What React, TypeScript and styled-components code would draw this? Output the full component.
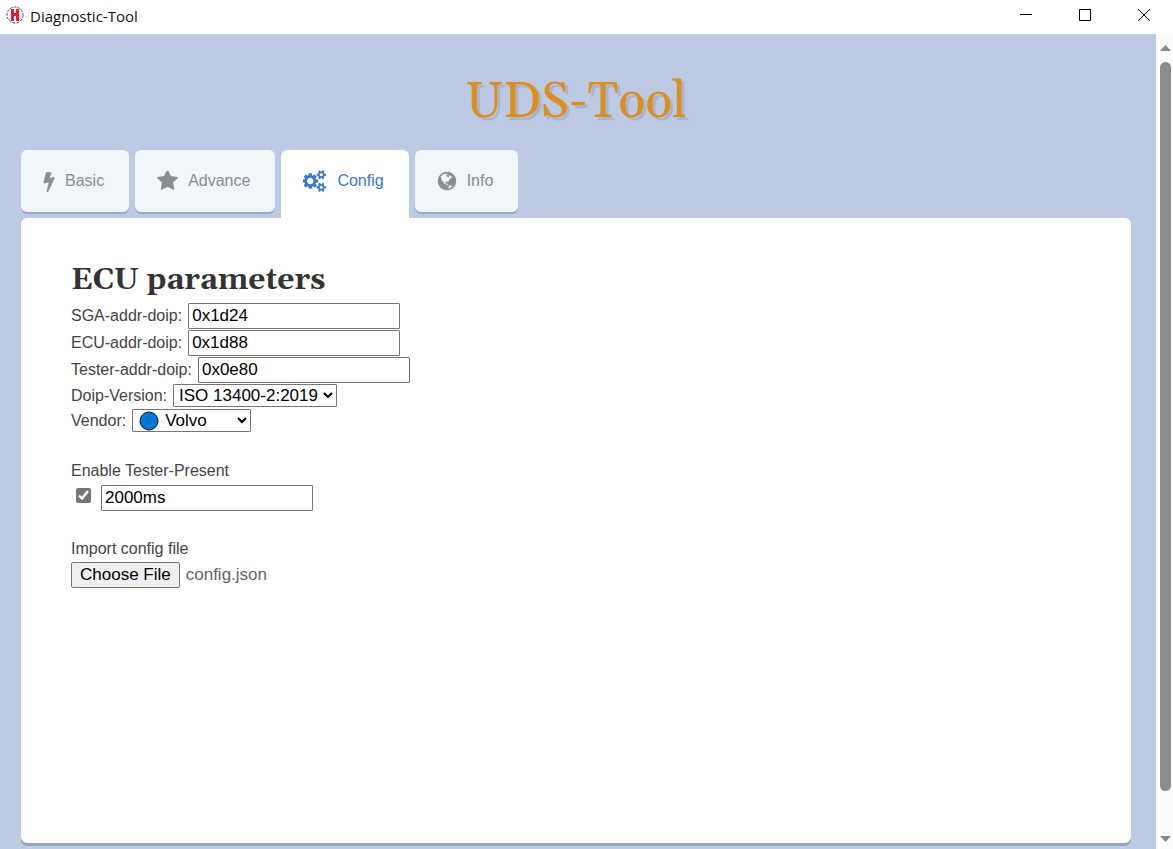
import React, { useRef } from "react";
import styled, { createGlobalStyle, css } from "styled-components";

const sans = `"Liberation Sans", Arial, sans-serif`;
const serif = `Georgia, Gelasio, "Liberation Serif", serif`;

const GlobalStyle = createGlobalStyle`
  *, *::before, *::after { box-sizing: border-box; }
  body {
    margin: 0;
    background: #bdcae4;
    color: #444;
    font: 16px/24px ${sans};
  }
`;

const Window = styled.div`
  display: flex;
  flex-direction: column;
  min-height: 100vh;
`;

const TitleBar = styled.header`
  display: flex;
  align-items: center;
  height: 34px;
  padding: 0 0 4px 6px;
  background: #fff;
`;

const AppName = styled.span`
  flex: 1;
  margin-left: 6px;
  padding-top: 2px;
  color: #111;
  font: 15px/20px "Open Sans", "Noto Sans", sans-serif;
`;

const WindowButton = styled.button`
  display: flex;
  align-items: center;
  justify-content: center;
  width: 59px;
  height: 30px;
  padding: 0;
  border: 0;
  background: none;
  color: #000;
`;

const Body = styled.div`
  display: flex;
  flex: 1;
`;

const Page = styled.main`
  display: flex;
  flex: 1;
  flex-direction: column;
  min-width: 0;
  padding: 35px 25px 6px 21px;
`;

const Title = styled.h1`
  margin: 0 0 13px;
  color: #dc8f1c;
  font: 400 50px/68px ${serif};
  text-align: center;
  text-shadow: 3px 3px 1px #a9b4cb;
`;

const Tabs = styled.nav`
  display: flex;
  align-items: flex-start;
  gap: 6px;
`;

const Tab = styled.button<{ $active?: boolean }>`
  display: flex;
  align-items: center;
  gap: 10px;
  height: 62px;
  margin-bottom: 6px;
  padding: 0 25px 0 22px;
  border: 0;
  border-radius: 6px;
  background: #f2f5fa;
  box-shadow: 0 2px 0 #9ba8c6;
  color: #8b8d91;
  font: 16px/24px ${sans};

  ${({ $active }) =>
    $active &&
    css`
      height: 68px;
      margin-bottom: 0;
      padding-bottom: 6px;
      border-radius: 6px 6px 0 0;
      background: #fff;
      box-shadow: none;
      color: #3a78cc;
    `}
`;

const Panel = styled.section`
  flex: 1;
  padding: 43px 50px;
  border-radius: 6px;
  background: #fff;
  box-shadow: 0 3px 0 #98a5ba;
`;

const Heading = styled.h2`
  margin: 0 0 3px;
  color: #333;
  font: 700 30px/38px ${serif};
`;

const Row = styled.div<{ $short?: boolean }>`
  display: flex;
  align-items: center;
  gap: 6px;
  height: ${({ $short }) => ($short ? 25 : 27)}px;
`;

const Group = styled.div`
  margin-top: 26px;
`;

const Caption = styled.label`
  display: block;
  margin-bottom: 1px;
`;

const TextBox = styled.input`
  width: 212px;
  height: 26px;
  padding: 1px 3px;
  border: 1px solid #767676;
  border-radius: 1px;
  background: #fff;
  color: #000;
  font: 17px/22px ${sans};
`;

const Select = styled.select<{ $width: number; $icon?: boolean }>`
  width: ${({ $width }) => $width}px;
  height: 23px;
  padding: 0 0 0 ${({ $icon }) => ($icon ? 28 : 1)}px;
  border: 1px solid #767676;
  border-radius: 1px;
  background: #fff;
  color: #000;
  font: 17px/20px ${sans};
`;

const IconSelect = styled.span`
  display: flex;
  position: relative;

  svg {
    position: absolute;
    top: 2px;
    left: 7px;
    pointer-events: none;
  }
`;

const CheckBox = styled.input`
  width: 15px;
  height: 15px;
  margin: 0 4px 5px 5px;
  accent-color: #767676;
`;

const FileButton = styled.button`
  height: 26px;
  padding: 0 8px;
  border: 1px solid #767676;
  border-radius: 2px;
  background: #efefef;
  color: #000;
  font: 17px/22px ${sans};
`;

const FileName = styled.span`
  color: #666;
  font-size: 17px;
`;

const ScrollTrack = styled.div`
  display: flex;
  flex-direction: column;
  align-items: center;
  gap: 11px;
  width: 17px;
  padding: 11px 0 7px 2px;
  background: #fcfcfc;
`;

const ScrollThumb = styled.div`
  flex: 1;
  width: 11px;
  margin-bottom: 34px;
  border-radius: 6px;
  background: #8b8b8b;
`;

const BoltIcon = () => (
  <svg width="12" height="21" viewBox="430 0 920 1792" fill="currentColor" aria-hidden="true">
    <path
      stroke="currentColor"
      strokeWidth="60"
      d="M1333 566q18 20 7 44l-540 1157q-13 25-42 25-4 0-14-2-17-5-25.5-19t-4.5-30l197-808-406 101q-4 1-12 1-18 0-31-11-18-15-13-39l201-825q4-14 16-23t28-9h328q19 0 32 12.5t13 29.5q0 8-5 18l-171 463 396-98q8-2 12-2 19 0 34 15z"
    />
  </svg>
);

const StarIcon = () => (
  <svg width="21" height="21" viewBox="64 128 1664 1664" fill="currentColor" aria-hidden="true">
    <path d="M1728 647q0 22-26 48l-363 354 86 500q1 7 1 20 0 21-10.5 35.5t-30.5 14.5q-19 0-40-12l-449-236-449 236q-22 12-40 12-21 0-31.5-14.5t-10.5-35.5q0-6 2-20l86-500-364-354q-25-27-25-48 0-37 56-46l502-73 225-455q19-41 49-41t49 41l225 455 502 73q56 9 56 46z" />
  </svg>
);

const CogsIcon = () => (
  <svg width="24" height="22" viewBox="0 0 1920 1792" fill="currentColor" aria-hidden="true">
    <path d="M832 896q0-106-75-181t-181-75-181 75-75 181 75 181 181 75 181-75 75-181zm768 512q0-52-38-90t-90-38-90 38-38 90q0 53 37.5 90.5t90.5 37.5 90.5-37.5 37.5-90.5zm0-1024q0-52-38-90t-90-38-90 38-38 90q0 53 37.5 90.5t90.5 37.5 90.5-37.5 37.5-90.5zm-384 421v185q0 10-7 19.5t-16 10.5l-155 24q-11 35-32 76 34 48 90 115 7 11 7 20 0 12-7 19-23 30-82.5 89.5t-78.5 59.5q-11 0-21-7l-115-90q-37 19-77 31-11 108-23 155-7 24-30 24h-186q-11 0-20-7.5t-10-17.5l-23-153q-34-10-75-31l-118 89q-7 7-20 7-11 0-21-8-144-133-144-160 0-9 7-19 10-14 41-53t47-61q-23-44-35-82l-152-24q-10-1-17-9.5t-7-19.5v-185q0-10 7-19.5t16-10.5l155-24q11-35 32-76-34-48-90-115-7-11-7-20 0-12 7-20 22-30 82-89t79-59q11 0 21 7l115 90q34-18 77-32 11-108 23-154 7-24 30-24h186q11 0 20 7.5t10 17.5l23 153q34 10 75 31l118-89q8-7 20-7 11 0 21 8 144 133 144 160 0 8-7 19-12 16-42 54t-45 60q23 48 34 82l152 23q10 2 17 10.5t7 19.5zm640 533v140q0 16-149 31-12 27-30 52 51 113 51 138 0 4-4 7-122 71-124 71-8 0-46-47t-52-68q-20 2-30 2t-30-2q-14 21-52 68t-46 47q-2 0-124-71-4-3-4-7 0-25 51-138-18-25-30-52-149-15-149-31v-140q0-16 149-31 13-29 30-52-51-113-51-138 0-4 4-7 4-2 35-20t59-34 30-16q8 0 46 46.5t52 67.5q20-2 30-2t30 2q51-71 92-112l6-2q4 0 124 70 4 3 4 7 0 25-51 138 17 23 30 52 149 15 149 31zm0-1024v140q0 16-149 31-12 27-30 52 51 113 51 138 0 4-4 7-122 71-124 71-8 0-46-47t-52-68q-20 2-30 2t-30-2q-14 21-52 68t-46 47q-2 0-124-71-4-3-4-7 0-25 51-138-18-25-30-52-149-15-149-31v-140q0-16 149-31 13-29 30-52-51-113-51-138 0-4 4-7 4-2 35-20t59-34 30-16q8 0 46 46.5t52 67.5q20-2 30-2t30 2q51-71 92-112l6-2q4 0 124 70 4 3 4 7 0 25-51 138 17 23 30 52 149 15 149 31z" />
  </svg>
);

const GlobeIcon = () => (
  <svg width="20" height="20" viewBox="64 64 1664 1664" fill="currentColor" aria-hidden="true">
    <path d="M896 128q209 0 385.5 103t279.500 279.500 103 385.500-103 385.500-279.500 279.500-385.500 103-385.500-103-279.500-279.500-103-385.500 103-385.500 279.500-279.500 385.500-103zm274 521q-2 1-9.500 9.500t-13.500 9.500q2 0 4.500-5t5-11 3.500-7q6-7 22-15 14-6 52-12 34-8 51 11-2-2 9.500-13t14.500-12q3-2 15-4.500t15-7.500l2-22q-12 1-17.500-7t-6.500-21q0 2-6 8 0-7-4.500-8t-11.500 1-9 1q-10-3-15-7.500t-8-16.500-4-15q-2-5-9.500-11t-9.500-10q-1-2-2.500-5.500t-3-6.500-4-5.500-5.500-2.500-7 5-7.500 10-4.500 5q-3-2-6-1.500t-4.500 1-4.500 3-5 3.500q-3 2-8.500 3t-8.500 2q15-5-1-11-10-4-16-3 9-4 7.500-12t-8.500-14h5q-1-4-8.500-8.500t-17.500-8.500-13-6q-8-5-34-9.500t-33-.5q-5 6-4.500 10.500t4 14 3.500 12.500q1 6-5.500 13t-6.500 12q0 7 14 15.500t10 21.500q-3 8-16 16t-16 12q-5 8-1.500 18.500t10.500 16.500q2 2 1.500 4t-3.500 4.500-5.500 4-6.500 3.500l-3 2q-11 5-20.500-6t-13.500-26q-7-25-16-30-23-8-29 1-5-13-41-26-25-9-58-4 6-1 0-15-7-15-19-12 3-6 4-17.500t1-13.500q3-13 12-23 1-1 7-8.500t9.500-13.500.5-6q35 4 50-11 5-5 11.500-17t10.500-17q9-6 14-5.500t14.500 5.500 14.500 5q14 1 15.500-11t-7.500-20q12 1 3-17-4-7-8-9-12-4-27 5-8 4 2 8-1-1-9.500 10.500t-16.500 17.500-16-5q-1-1-5.500-13.500t-9.500-13.500q-8 0-16 15 3-8-11-15t-24-8q19-12-8-27-7-4-20.500-5t-19.500 4q-5 7-5.500 11.500t5 8 10.500 5.500 11.500 4 8.500 3q14 10 8 14-2 1-8.500 3.500t-11.500 4.500-6 4q-3 4 0 14t-2 14q-5-5-9-17.500t-7-16.500q7 9-25 6l-10-1q-4 0-16 2t-20.500 1-13.500-8q-4-8 0-20 1-4 4-2-4-3-11-9.500t-10-8.500q-46 15-94 41 6 1 12-1 5-2 13-6.500t10-5.500q34-14 42-7l5-5q14 16 20 25-7-4-30-1-20 6-22 12 7 12 5 18-4-3-11.500-10t-14.500-11-15-5q-16 0-22 1-146 80-235 222 7 7 12 8 4 1 5 9t2.500 11 11.500-3q9 8 3 19 1-1 44 27 19 17 21 21 3 11-10 18-1-2-9-9t-9-4q-3 5 .5 18.500t10.500 12.500q-7 0-9.500 16t-2.500 35.500-1 23.500l2 1q-3 12 5.500 34.500t21.500 19.500q-13 3 20 43 6 8 8 9 3 2 12 7.500t15 10 10 10.500q4 5 10 22.500t14 23.500q-2 6 9.500 20t10.500 23q-1 0-2.500 1t-2.500 1q3 7 15.500 14t15.500 13q1 3 2 10t3 11 8 2q2-20-24-62-15-25-17-29-3-5-5.500-15.500t-4.500-14.500q2 0 6 1.500t8.500 3.500 7.500 4 2 3q-3 7 2 17.500t12 18.500 17 19 12 13q6 6 14 19.500t0 13.500q9 0 20 10.500t17 19.500q5 8 8 26t5 24q2 7 8.500 13.500t12.500 9.500l16 8 13 7q5 2 18.500 10.500t21.500 11.500q10 4 16 4t14.500-2.500 13.500-3.500q15-2 29 15t21 21q36 19 55 11-2 1 .5 7.500t8 15.500 9 14.500 5.500 8.500q5 6 18 15t18 15q6-4 7-9-3 8 7 20t18 10q14-3 14-32-31 15-49-18 0-1-2.500-5.500t-4-8.500-2.500-8.500 0-7.500 5-3q9 0 10-3.500t-2-12.500-4-13q-1-8-11-20t-12-15q-5 9-16 8t-16-9q0 1-1.500 5.500t-1.500 6.500q-13 0-15-1 1-3 2.500-17.500t3.500-22.500q1-4 5.500-12t7.500-14.500 4-12.500-4.500-9.500-17.500-2.500q-19 1-26 20-1 3-3 10.500t-5 11.500-9 7q-7 3-24 2t-24-5q-13-8-22.500-29t-9.500-37q0-10 2.500-26.500t3-25-5.500-24.500q3-2 9-9.500t10-10.500q2-1 4.500-1.500t4.500 0 4-1.500 3-6q-1-1-4-3-3-3-4-3 7 3 28.500-1.500t27.500 1.500q15 11 22-2 0-1-2.500-9.500t-.5-13.500q5 27 29 9 3 3 15.500 5t17.500 5q3 2 7 5.500t5.500 4.500 5-.5 8.500-6.500q10 14 12 24 11 40 19 44 7 3 11 2t4.500-9.500 0-14-1.500-12.500l-1-8v-18l-1-8q-15-3-18.500-12t1.500-18.500 15-18.500q1-1 8-3.500t15.500-6.500 12.500-8q21-19 15-35 7 0 11-9-1 0-5-3t-7.500-5-4.500-2q9-5 2-16 5-3 7.500-11t7.500-10q9 12 21 2 7-8 1-16 5-7 20.500-10.500t18.500-9.500q7 2 8-2t1-12 3-12q4-5 15-9t13-5l17-11q3-4 0-4 18 2 31-11 10-11-6-20 3-6-3-9.500t-15-5.500q3-1 11.500-.5t10.500-1.500q15-10-7-16-17-5-43 12zm-163 877q206-36 351-189-3-3-12.500-4.500t-12.500-3.500q-18-7-24-8 1-7-2.500-13t-8-9-12.500-8-11-7q-2-2-7-6t-7-5.500-7.500-4.500-8.500-2-10 1l-3 1q-3 1-5.500 2.500t-5.500 3-4 3 0 2.500q-21-17-36-22-5-1-11-5.500t-10.500-7-10-1.500-11.500 7q-5 5-6 15t-2 13q-7-5 0-17.500t2-18.500q-3-6-10.500-4.500t-12 4.500-11.500 8.500-9 6.500-8.500 5.500-8.500 7.500q-3 4-6 12t-5 11q-2-4-11.500-6.500t-9.500-5.500q2 10 4 35t5 38q7 31-12 48-27 25-29 40-4 22 12 26 0 7-8 20.500t-7 21.500q0 6 2 16z" />
  </svg>
);

const AppIcon = () => (
  <svg width="18" height="18" viewBox="0 0 18 18" aria-hidden="true">
    <circle cx="9" cy="9" r="8" fill="#fff" stroke="#6b3f6d" strokeWidth="1" strokeDasharray="3 1" />
    <path fill="#e81c2a" d="M5 3h3v4h2V3h3v12h-3v-5H8v5H5z" />
  </svg>
);

const ArrowIcon = ({ down }: { down?: boolean }) => (
  <svg width="11" height="6" viewBox="0 0 11 6" aria-hidden="true">
    <path fill="#8b8b8b" d={down ? "M0 0h11L5.5 6z" : "M0 6h11L5.5 0z"} />
  </svg>
);

export default function App() {
  const fileInput = useRef<HTMLInputElement>(null);

  return (
    <Window>
      <GlobalStyle />
      <TitleBar>
        <AppIcon />
        <AppName>Diagnostic-Tool</AppName>
        <WindowButton aria-label="Minimize">
          <svg width="12" height="12" viewBox="0 0 12 12" aria-hidden="true">
            <path d="M0 5.5h12" stroke="currentColor" />
          </svg>
        </WindowButton>
        <WindowButton aria-label="Maximize">
          <svg width="12" height="12" viewBox="0 0 12 12" aria-hidden="true">
            <path d="M.5.5h11v11H.5z" stroke="currentColor" fill="none" />
          </svg>
        </WindowButton>
        <WindowButton aria-label="Close">
          <svg width="12" height="12" viewBox="0 0 12 12" aria-hidden="true">
            <path d="M0 0l12 12M12 0L0 12" stroke="currentColor" />
          </svg>
        </WindowButton>
      </TitleBar>
      <Body>
        <Page>
          <Title>UDS-Tool</Title>
          <Tabs>
            <Tab>
              <BoltIcon />
              Basic
            </Tab>
            <Tab>
              <StarIcon />
              Advance
            </Tab>
            <Tab $active aria-current="page">
              <CogsIcon />
              Config
            </Tab>
            <Tab>
              <GlobeIcon />
              Info
            </Tab>
          </Tabs>
          <Panel>
            <Heading>ECU parameters</Heading>
            <Row>
              <label htmlFor="sga">SGA-addr-doip:</label>
              <TextBox id="sga" defaultValue="0x1d24" />
            </Row>
            <Row>
              <label htmlFor="ecu">ECU-addr-doip:</label>
              <TextBox id="ecu" defaultValue="0x1d88" />
            </Row>
            <Row>
              <label htmlFor="tester">Tester-addr-doip:</label>
              <TextBox id="tester" defaultValue="0x0e80" />
            </Row>
            <Row $short>
              <label htmlFor="version">Doip-Version:</label>
              <Select id="version" $width={164}>
                <option>ISO 13400-2:2019</option>
              </Select>
            </Row>
            <Row $short>
              <label htmlFor="vendor">Vendor:</label>
              <IconSelect>
                <Select id="vendor" $width={119} $icon>
                  <option>Volvo</option>
                </Select>
                <svg width="20" height="20" viewBox="0 0 20 20" aria-hidden="true">
                  <circle cx="10" cy="10" r="9" fill="#0078d7" stroke="#111" />
                </svg>
              </IconSelect>
            </Row>
            <Group>
              <Caption htmlFor="present">Enable Tester-Present</Caption>
              <Row>
                <CheckBox id="present" type="checkbox" defaultChecked />
                <TextBox aria-label="Tester-Present interval" defaultValue="2000ms" />
              </Row>
            </Group>
            <Group>
              <Caption htmlFor="config-file">Import config file</Caption>
              <Row $short>
                <FileButton type="button" onClick={() => fileInput.current?.click()}>
                  Choose File
                </FileButton>
                <FileName>config.json</FileName>
                <input id="config-file" ref={fileInput} type="file" hidden />
              </Row>
            </Group>
          </Panel>
        </Page>
        <ScrollTrack aria-hidden="true">
          <ArrowIcon />
          <ScrollThumb />
          <ArrowIcon down />
        </ScrollTrack>
      </Body>
    </Window>
  );
}
